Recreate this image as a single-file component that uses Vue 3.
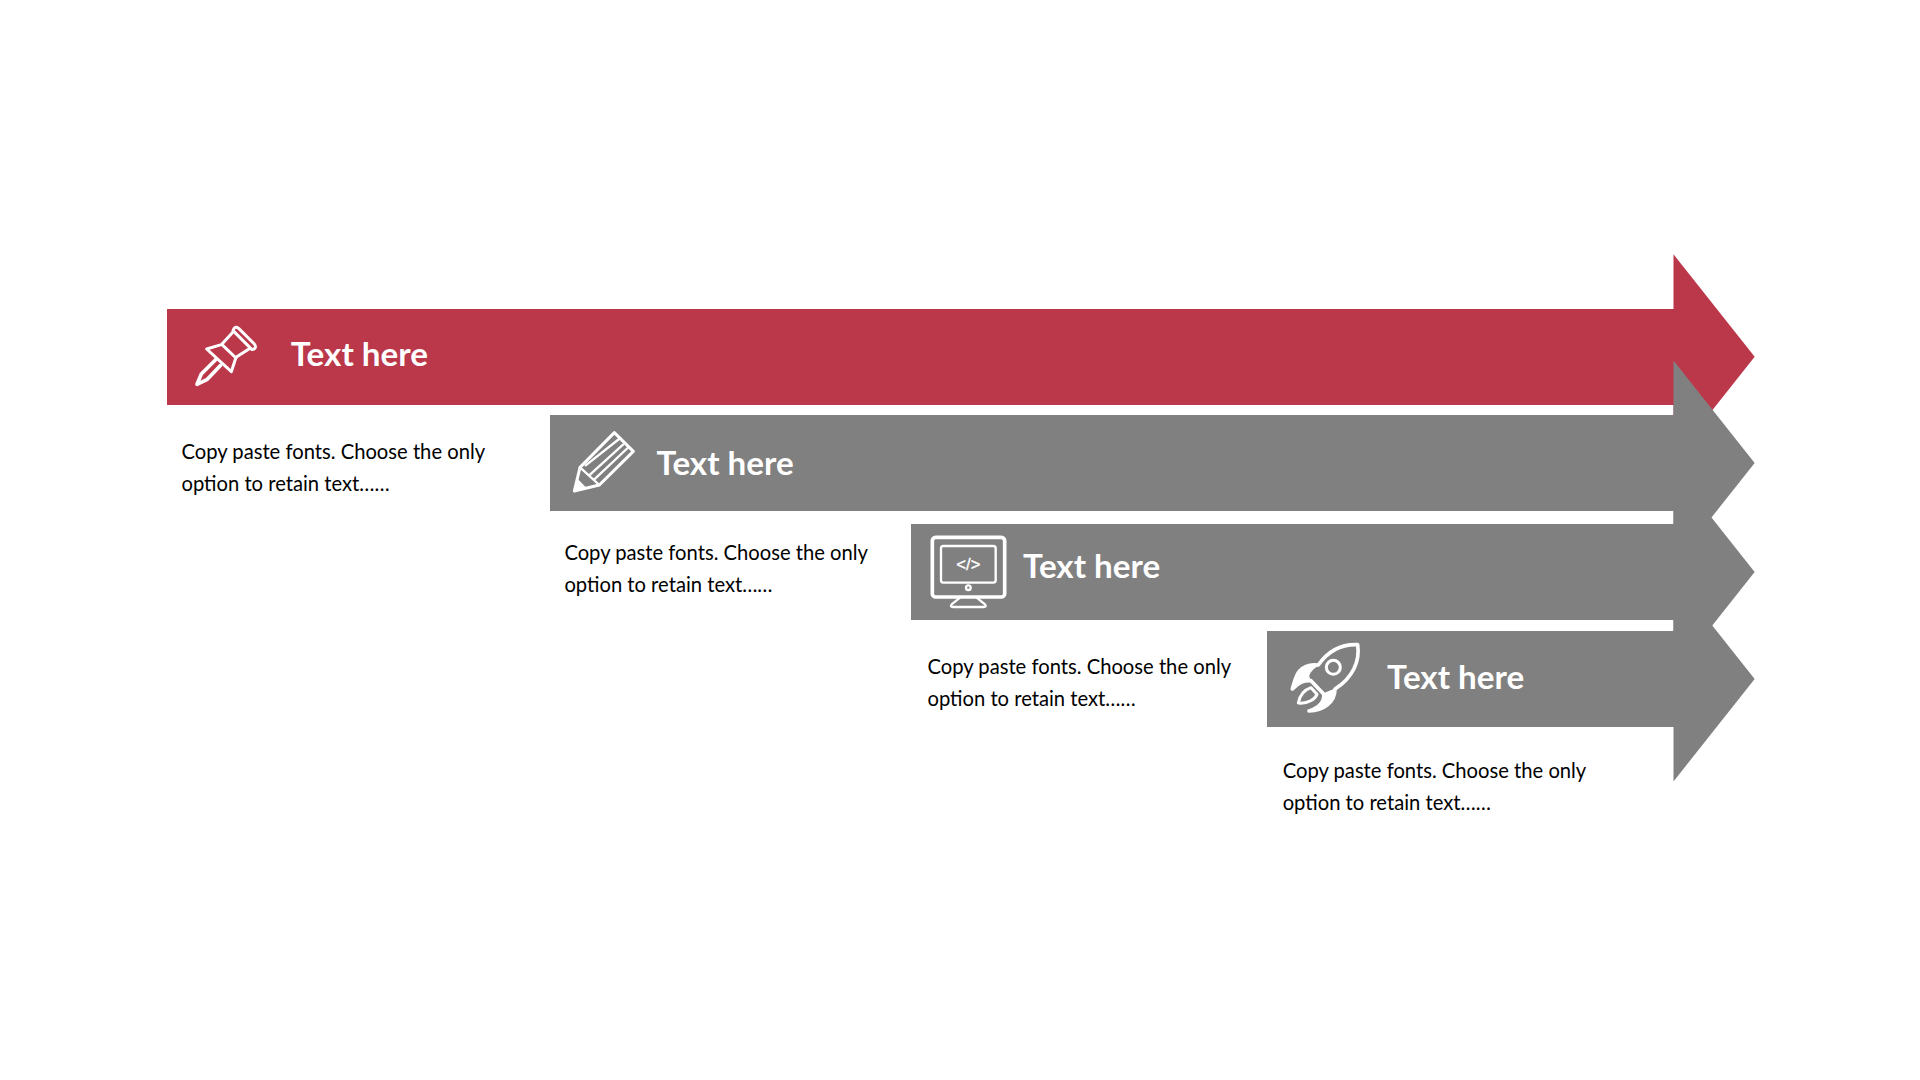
<script setup>
const steps = [
  { id: 'pin', tone: 'red' },
  { id: 'pencil', tone: 'gray' },
  { id: 'monitor', tone: 'gray' },
  { id: 'rocket', tone: 'gray' },
]
</script>

<template>
  <main class="stage">
    <section class="timeline">
      <template v-for="(s, i) in steps" :key="s.id">
        <div class="bar" :class="[s.tone, 'bar-' + s.id]">
          <svg v-if="s.id === 'pin'" class="icon icon-pin" viewBox="0 0 240 225">
            <path d="M141 44 Q146 28 158 37 L205 84 Q214 97 198 101 Z" />
            <path d="M139 50 L106 86 L62 99 L136 167 L150 124 L190 98" />
            <path d="M108 86 L150 126" />
            <path d="M88 132 L46 174 L33 205 L64 190 L104 148" class="thick" />
          </svg>
          <svg v-else-if="s.id === 'pencil'" class="icon icon-pencil" viewBox="0 0 240 225">
            <path d="M45 124 L148 20 L205 76 L103 177 L28 195 Z" />
            <path d="M45 124 L103 177 M75 146 L174 56 M88 160 L188 66 M62 118 L166 36" class="thin" />
            <path d="M28 195 L36 160 L62 186 Z" class="solid" />
          </svg>
          <svg v-else-if="s.id === 'monitor'" class="icon icon-monitor" viewBox="0 0 255 240">
            <rect x="22" y="19" width="217" height="179" rx="10" class="thick" />
            <rect x="48" y="45" width="164" height="110" rx="7" class="thin" />
            <text x="130" y="116" class="code">&lt;/&gt;</text>
            <circle cx="130" cy="170" r="7" class="thin" />
            <path d="M105 200 L80 220 Q74 228 84 228 L176 228 Q186 228 180 220 L155 200" class="thin" />
          </svg>
          <svg v-else class="icon icon-rocket" viewBox="0 0 240 240">
            <path class="thick" d="M218 17 C170 15 130 35 100 78 C85 76 60 78 45 95 C32 108 28 130 22 150 C40 130 55 124 78 125 L116 165 C120 185 105 205 72 216 C115 215 150 190 150 150 C205 115 225 65 218 17 Z" />
            <path class="solid" d="M100 78 C85 76 60 78 45 95 C32 108 28 130 22 150 C40 130 55 124 78 125 C60 110 80 90 100 78 Z M116 165 C120 185 105 205 72 216 C115 215 150 190 150 150 C140 155 125 160 116 165 Z" />
            <path d="M40 192 C45 165 60 152 78 146 L96 166 C90 180 70 195 40 192 Z" />
            <circle cx="145" cy="85" r="21" />
          </svg>
          <span class="label">Text here</span>
        </div>
        <p class="caption" :class="'caption-' + s.id">Copy paste fonts. Choose the only<br />option to retain text……</p>
      </template>
    </section>
  </main>
</template>

<style scoped>
.stage {
  width: 1920px;
  height: 1080px;
  overflow: hidden;
  background: #fff;
  padding: 308.7px 0 0 166.7px;
  box-sizing: border-box;
  font-family: "Lato", "Liberation Sans", sans-serif;
}
.timeline {
  display: grid;
  width: 1507.3px;
  grid-template-columns: 383px 361.3px 355.7px 407.3px;
  grid-template-rows: 106.3px 109px 107px auto;
}
.bar {
  position: relative;
  height: 96px;
  display: flex;
  align-items: center;
  color: #fff;
  grid-column-end: 5;
}
.bar::after {
  content: "";
  position: absolute;
  left: calc(100% - 0.5px);
  top: -54.5px;
  bottom: -54.5px;
  width: 81.2px;
  background: inherit;
  clip-path: polygon(0 0, 100% 50%, 0 100%);
}
.red { background: #bb374a; }
.gray { background: #808080; }
.bar-pin { grid-row: 1; grid-column-start: 1; }
.bar-pencil { grid-row: 2; grid-column-start: 2; }
.bar-monitor { grid-row: 3; grid-column-start: 3; }
.bar-rocket { grid-row: 4; grid-column-start: 4; }

.label {
  font-size: 33.2px;
  font-weight: 700;
  line-height: 1;
  white-space: nowrap;
}
.bar-pin .label { margin: -7px 0 0 25px; }
.bar-pencil .label { margin: 0 0 0 11.5px; }
.bar-monitor .label { margin: -12px 0 0 13px; }
.bar-rocket .label { margin: -4px 0 0 22px; }

.icon {
  flex: none;
  fill: none;
  stroke: #fff;
  stroke-width: 9;
  stroke-linejoin: round;
  stroke-linecap: round;
}
.icon .thin { stroke-width: 7; }
.icon .thick { stroke-width: 11; }
.icon .solid { fill: #fff; stroke-width: 4; }
.icon .code {
  fill: #fff;
  stroke: #fff;
  stroke-width: 1;
  font-size: 50px;
  text-anchor: middle;
  font-family: "Liberation Sans", sans-serif;
}
.icon-pin { width: 80px; height: 75px; margin: -6px 0 0 19px; }
.icon-pencil { width: 80px; height: 75px; margin: 2px 0 0 15.3px; }
.icon-monitor { width: 85px; height: 80px; margin: -1px 0 0 14px; }
.icon-rocket { width: 80px; height: 80px; margin: 1px 0 0 18.3px; }

.caption {
  margin: 0;
  font-size: 20.2px;
  line-height: 32px;
  color: #000;
  white-space: nowrap;
}
.caption-pin { grid-row: 2; grid-column-start: 1; padding: 19.8px 0 0 14.8px; }
.caption-pencil { grid-row: 3; grid-column-start: 2; padding: 12.5px 0 0 14.7px; }
.caption-monitor { grid-row: 4; grid-column-start: 3; padding: 19.5px 0 0 16.5px; }
.caption-rocket { grid-row: 5; grid-column-start: 4; padding: 27px 0 0 16px; }
</style>

<style>
body { background: #fff; }
</style>
